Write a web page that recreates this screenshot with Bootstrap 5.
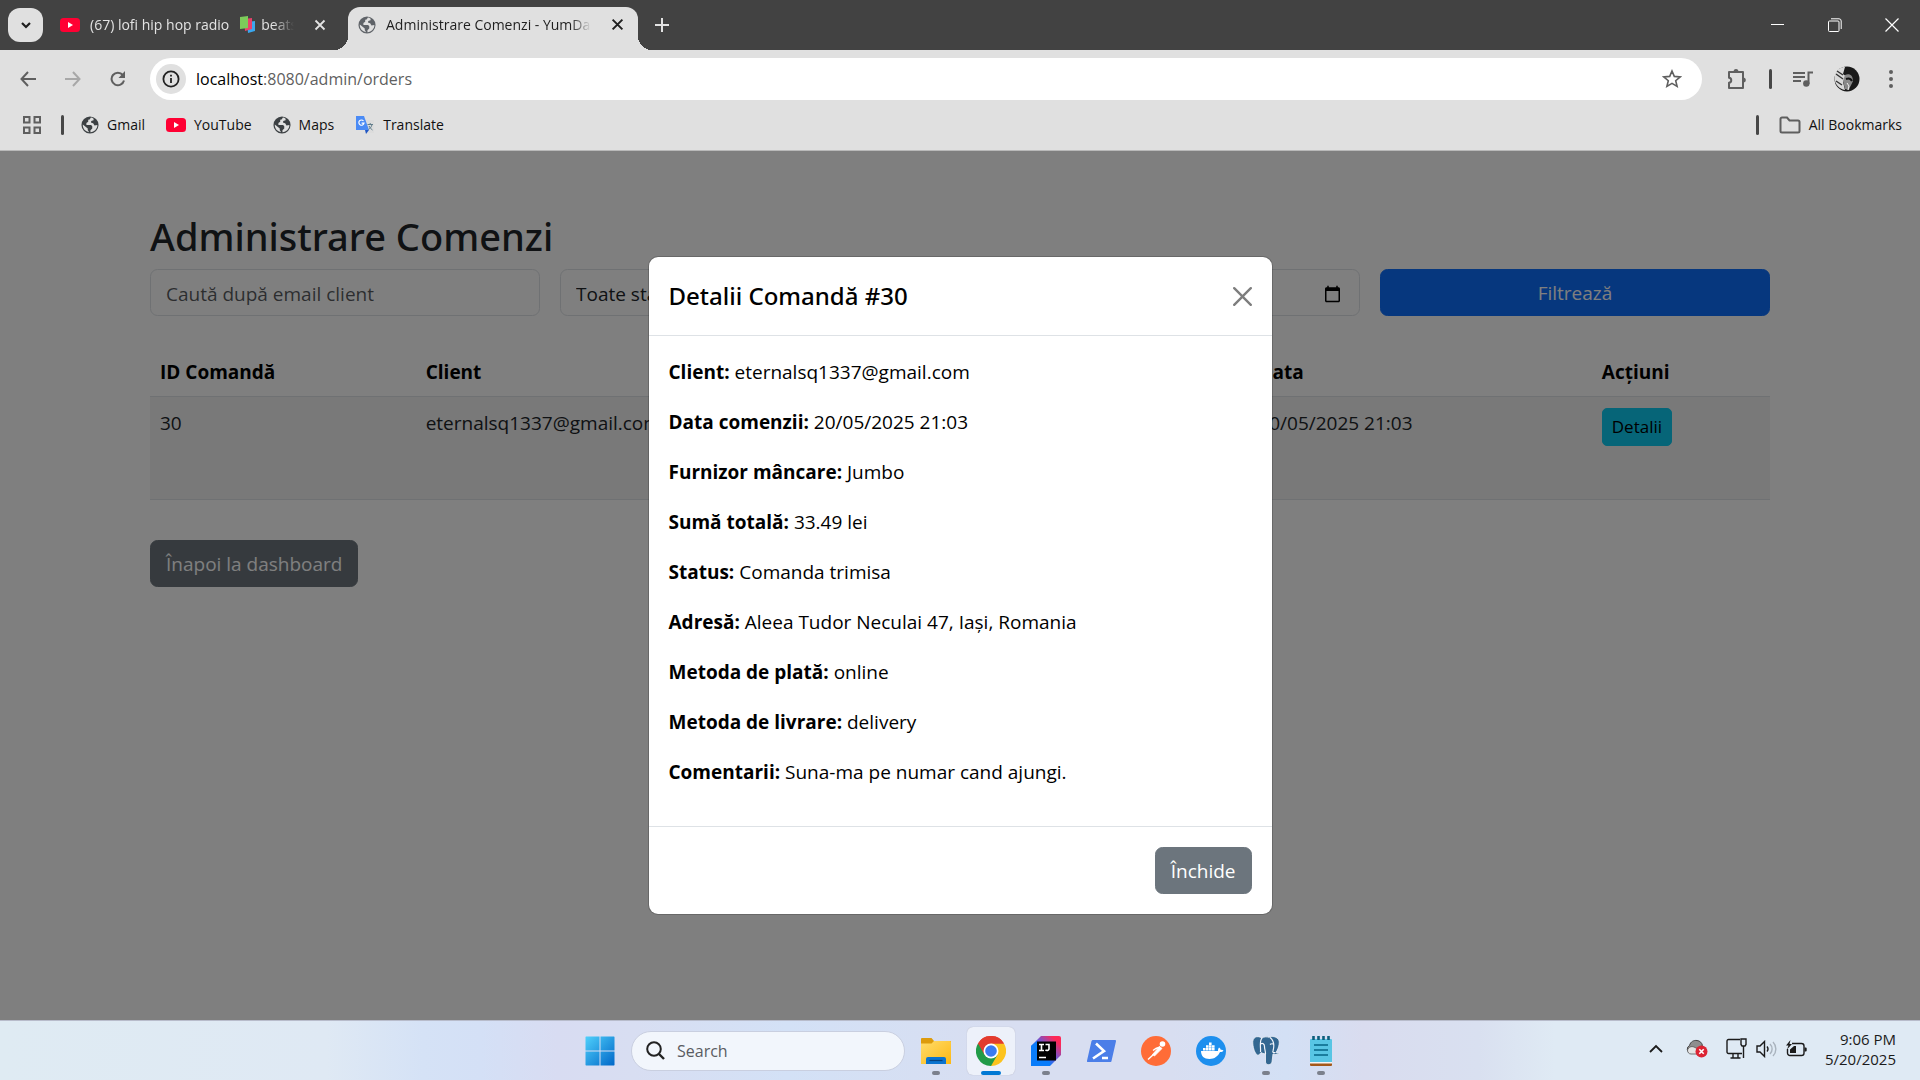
<!DOCTYPE html>
<html lang="ro">
<head>
<meta charset="utf-8">
<meta name="viewport" content="width=device-width, initial-scale=1">
<title>Administrare Comenzi - YumDash</title>
<link href="https://cdn.jsdelivr.net/npm/bootstrap@5.3.0/dist/css/bootstrap.min.css" rel="stylesheet">
<style>
:root { font-size: 20px; --ui: "Open Sans", "Noto Sans", sans-serif; }
body { font-family: var(--ui); font-size: 19px; line-height: 30px; overflow: hidden; }
svg { flex: none; display: block; }
button.bare { border: 0; background: none; padding: 0; color: inherit; display: flex; align-items: center; justify-content: center; }

/* browser window */
.tabstrip { height: 50px; background: #424242; color: #e3e3e3; font-size: 14px; line-height: 20px; padding-left: 8px; }
.tab-search { width: 35px; height: 34px; border-radius: 12px; background: #e0e0e0 !important; color: #1f1f1f !important; margin-top: 8px; }
.browser-tab { height: 43px; margin-top: 7px; white-space: nowrap; }
.tab-idle { width: 305px; padding: 0 22px 8px 17px; }
.tab-live { width: 290px; padding: 0 14px 8px 10px; background: #e0e0e0; color: #1f1f1f; border-radius: 12px 12px 0 0; position: relative; }
.tab-live::before, .tab-live::after { content: ""; position: absolute; bottom: 0; width: 14px; height: 14px; }
.tab-live::before { left: -14px; background: radial-gradient(circle at 0 0, transparent 14px, #e0e0e0 14px); }
.tab-live::after { right: -14px; background: radial-gradient(circle at 100% 0, transparent 14px, #e0e0e0 14px); }
.tab-title { flex: 1 1 0; overflow: hidden; -webkit-mask-image: linear-gradient(90deg, #000 90%, transparent); mask-image: linear-gradient(90deg, #000 90%, transparent); }
.tab-new { margin-left: 12px; }
.win-buttons button.bare { width: 57px; height: 50px; }
.toolbar-row { background: #e0e0e0; height: 58px; color: #5f5f5f; }
.nav-tools { width: 150px; padding-left: 5px; }
.nav-tools button.bare { width: 45px; height: 42px; }
.address { height: 42px; border-radius: 21px; background: #fff; padding: 0 20px 0 6px; font-size: 16px; line-height: 24px; }
.info-dot { width: 30px; height: 30px; border-radius: 50%; background: #e0e0e0; color: #222; }
.right-tools { width: 218px; padding-left: 24px; gap: 21px; }
.menu-dots { width: 20px; }
.tool-line { width: 3px; height: 20px; border-radius: 2px; background: #474747; }
.bookmarks { background: #e0e0e0; height: 43px; border-bottom: 1px solid #b9b9b9; padding: 0 18px 8px 23px; font-size: 14px; line-height: 20px; }
.bookmarks a { color: #111; text-decoration: none; display: flex; align-items: center; gap: 8px; }
.bookmark-list { gap: 21px; margin-left: 17px; }

/* page */
.page-area { flex: 1 1 0; min-height: 0; position: relative; overflow: hidden; }
.container-xl { max-width: 1650px; }
.page-area h2 { font-family: "Noto Sans", sans-serif; font-size: 38px; line-height: 50px; font-weight: 500; margin-bottom: 8px; }
.btn, .form-control, .form-select { font-size: 19px; line-height: 30px; padding-top: 8px; padding-bottom: 7px; height: 47px; }
.btn { --bs-btn-padding-x: 15px; }
.btn-sm { font-size: 17px; line-height: 26px; height: 38px; padding: 5px 9px; }
.form-control, .form-select { padding: 9px 15px 6px; }
.table { table-layout: fixed; --bs-table-striped-bg: rgba(0,0,0,.05); margin-bottom: 40px; }
.table th, .table td { padding: 11px 10px 9px; color: #000; }
.table tbody tr { height: 103px; }
.shade { position: absolute; inset: 0; background: rgba(0,0,0,.5); z-index: 10; }
.page-area .modal { position: absolute; display: flex; z-index: 20; align-items: center; justify-content: center; }
.page-area .modal-dialog { width: 625px; max-width: 625px; margin: 0; }
.modal-title { font-family: "Noto Sans", sans-serif; font-size: 24px; line-height: 38px; font-weight: 500; color: #000; }
.modal-content { color: #000; }
.modal-body { padding: 21px 20px 19px; }
.modal-body p { margin-bottom: 20px; }

/* taskbar */
.taskbar { height: 60px; border-top: 1px solid #b8bccb; background: linear-gradient(90deg, #dfebf3 0, #dfe9f4 17%, #d5e2f6 22%, #d4e0f6 25%, #d8dcf2 29%, #d8def2 33%, #d3e1f6 41%, #d8def1 52%, #d8def1 61%, #d3e0f5 67%, #d9dcef 71%, #d9e0f0 77%, #dfeaf4 81%, #dfeaf4 100%); color: #1b1b1b; }
.dock { margin-left: 576px; gap: 7px; }
.dock button.bare { width: 48px; height: 48px; border-radius: 6px; position: relative; }
.dock .running::after { content: ""; position: absolute; left: 20px; bottom: 0; width: 8px; height: 4px; border-radius: 2px; background: #7b808c; }
.dock .focused { background: #edf1fa; box-shadow: 0 0 1px #aab; }
.dock .focused::after { left: 14px; width: 20px; background: #0078d4; }
.find-box { width: 274px; height: 40px; border-radius: 20px; background: #f2f6fc; border: 1px solid #c9cfe0; padding: 0 14px; }
.find-box input { border: 0; outline: 0; background: none; width: 150px; font-size: 16px; line-height: 22px; padding: 0; margin-left: 2px; }
.find-box input::placeholder { color: #5a5c62; opacity: 1; }
.tray { font-size: 15px; line-height: 20px; margin-right: 24px; gap: 18px; padding-bottom: 4px; }
.tray-group { gap: 9px; }
</style>
<script src="https://cdn.jsdelivr.net/npm/bootstrap@5.3.0/dist/js/bootstrap.bundle.min.js"></script>
</head>
<body class="vh-100 d-flex flex-column">

<svg width="0" height="0" class="position-absolute" aria-hidden="true">
  <defs>
    <symbol id="globe" viewBox="0 0 20 20"><circle cx="10" cy="10" r="9.5" fill="currentColor"/><path d="M11 1.8 9.600 3.800 8 4.300V6.500L6 7.800V10h5.200l1.300 1.500V14l-2 1.800V18c4.500-.3 7.700-3.800 7.700-8L15 10.500 13.500 8l-2.200-.5V5.500l2.700-.8V3C13 2.300 12 1.900 11 1.800zM2 9.500 7.500 14v1.500L9 18C5 17.500 1.700 14 2 9.500z" fill="#e0e0e0"/></symbol>
    <symbol id="youtube" viewBox="0 0 20 14"><rect width="20" height="14" rx="3.500" fill="#ff0033"/><path d="M8 4v6l5-3z" fill="#fff"/></symbol>
    <symbol id="cross" viewBox="0 0 12 12"><path d="M1.500 1.500l9 9M10.500 1.500l-9 9" stroke="currentColor" stroke-width="1.800" fill="none"/></symbol>
  </defs>
</svg>

<header>
  <div class="tabstrip d-flex">
    <button class="bare tab-search" aria-label="Search tabs"><svg width="12" height="12" viewBox="0 0 12 12"><path d="M2 4l4 4 4-4" fill="none" stroke="currentColor" stroke-width="2.200"/></svg></button>
    <div class="browser-tab tab-idle d-flex align-items-center">
      <svg width="20" height="14"><use href="#youtube"/></svg>
      <span class="tab-title d-flex align-items-center ms-2">(67) lofi hip hop radio
        <svg class="ms-2 me-1" width="17" height="17" viewBox="0 0 17 17"><path d="M8 6l8-1v10l-7 2z" fill="#3aa7ee"/><path d="M5 3l8-1v11l-7 2z" fill="#e8416b"/><path d="M1 1l8-1v12l-8 1z" fill="#7ccb5a"/></svg>
        beats</span>
      <button class="bare ms-3" aria-label="Close tab"><svg width="12" height="12"><use href="#cross"/></svg></button>
    </div>
    <div class="browser-tab tab-live d-flex align-items-center">
      <svg width="18" height="18" color="#5f6368"><use href="#globe"/></svg>
      <span class="tab-title ms-2">Administrare Comenzi - YumDash</span>
      <button class="bare ms-3" aria-label="Close tab"><svg width="13" height="13"><use href="#cross"/></svg></button>
    </div>
    <button class="bare tab-new px-1" aria-label="New tab"><svg width="14" height="14" viewBox="0 0 14 14"><path d="M7 0v14M0 7h14" stroke="currentColor" stroke-width="2"/></svg></button>
    <div class="win-buttons d-flex ms-auto">
      <button class="bare" aria-label="Minimize"><svg width="13" height="13" viewBox="0 0 13 13"><path d="M0 5.500h13" stroke="#fff"/></svg></button>
      <button class="bare" aria-label="Restore"><svg width="14" height="14" viewBox="0 0 14 14" fill="none" stroke="#fff"><rect x=".5" y="3" width="10.500" height="10.500" rx="1"/><path d="M3 .8h8a2.200 2.200 0 0 1 2.200 2.200v8"/></svg></button>
      <button class="bare" aria-label="Close"><svg width="14" height="14" viewBox="0 0 14 14"><path d="M.5.5l13 13M13.500.5l-13 13" stroke="#fff" stroke-width="1.200"/></svg></button>
    </div>
  </div>

  <div class="toolbar-row d-flex align-items-center">
    <div class="nav-tools d-flex">
      <button class="bare" aria-label="Back"><svg width="16" height="16" viewBox="0 0 16 16"><path d="M8 1L1.500 8 8 15M1.500 8H16" fill="none" stroke="currentColor" stroke-width="2"/></svg></button>
      <button class="bare" aria-label="Forward" disabled><svg width="16" height="16" viewBox="0 0 16 16"><path d="M8 1l6.500 7L8 15M14.500 8H0" fill="none" stroke="#a8a8a8" stroke-width="2"/></svg></button>
      <button class="bare" aria-label="Reload"><svg width="16" height="16" viewBox="0 0 16 16"><path d="M14 9.500A6.300 6.300 0 1 1 12.800 4L14 5.500" fill="none" stroke="currentColor" stroke-width="2"/><path d="M15 0v7H8.500z" fill="currentColor"/></svg></button>
    </div>
    <div class="address d-flex align-items-center flex-fill">
      <span class="info-dot d-flex align-items-center justify-content-center"><svg width="18" height="18" viewBox="0 0 18 18"><circle cx="9" cy="9" r="7.600" fill="none" stroke="currentColor" stroke-width="1.800"/><path d="M9 8v5M9 4.800v1.800" stroke="currentColor" stroke-width="1.800"/></svg></span>
      <div class="ps-2 flex-fill" role="textbox" aria-label="Address"><span class="text-black">localhost</span>:8080/admin/orders</div>
      <button class="bare" aria-label="Bookmark this page"><svg width="20" height="20" viewBox="0 0 20 20"><path d="M10 2l2.300 5.400 5.900.5-4.500 3.800 1.400 5.700L10 14.400l-5.100 3 1.400-5.700L1.800 7.900l5.900-.5z" fill="none" stroke="currentColor" stroke-width="1.600"/></svg></button>
    </div>
    <div class="right-tools d-flex align-items-center">
      <button class="bare" aria-label="Extensions"><svg width="22" height="22" viewBox="0 0 22 22"><path d="M3 4h14v16H3v-5.200c3-.3 3-4.700 0-5z" fill="none" stroke="currentColor" stroke-width="2" stroke-linejoin="round"/><path d="M7.500 4a2.500 3 0 0 1 5 0zM17 9.500a2.800 2.500 0 0 1 0 5z" fill="currentColor"/></svg></button>
      <span class="tool-line"></span>
      <button class="bare" aria-label="Media"><svg width="20" height="16" viewBox="0 0 20 16"><path d="M0 2h12M0 6h12M0 10h8M15.500 13V1.500H20" fill="none" stroke="currentColor" stroke-width="2"/><circle cx="13.300" cy="12.500" r="3.200" fill="currentColor"/></svg></button>
      <button class="bare" aria-label="Profile"><svg width="26" height="26" viewBox="0 0 26 26"><circle cx="13" cy="13" r="12.500" fill="#191919"/><path d="M1 8C3 3 7 1 11 1L9 8l4 3-4 5 2 8C5 23 1 18 .6 13z" fill="#d9d9d9"/><path d="M2 8l7 5M3 5l6 4M2 15l6 4" stroke="#333" stroke-width="1.400"/><path d="M11 9c5-2 8 1 8 6-1 3-3 5-4 9l-4-1-2-8z" fill="#888"/><path d="M12 13c3-1 5 0 6 2" stroke="#111" stroke-width="2" fill="none"/><path d="M13 17l2 3-1 4" stroke="#eee" fill="none"/></svg></button>
      <button class="bare menu-dots" aria-label="Menu"><svg width="4" height="18" viewBox="0 0 4 18" fill="currentColor"><circle cx="2" cy="2" r="2"/><circle cx="2" cy="9" r="2"/><circle cx="2" cy="16" r="2"/></svg></button>
    </div>
  </div>

  <nav class="bookmarks d-flex align-items-center" aria-label="Bookmarks">
    <svg width="18" height="18" viewBox="0 0 18 18" fill="none" stroke="#5f5f5f" stroke-width="2"><path d="M1 1h5.500v5.500H1zM11.500 1H17v5.500h-5.500zM1 11.500h5.500V17H1zM11.500 11.500H17V17h-5.500z"/></svg>
    <span class="tool-line ms-3"></span>
    <div class="bookmark-list d-flex">
      <a href="#"><svg width="18" height="18" color="#3c4043"><use href="#globe"/></svg>Gmail</a>
      <a href="#"><svg width="20" height="14"><use href="#youtube"/></svg>YouTube</a>
      <a href="#"><svg width="18" height="18" color="#3c4043"><use href="#globe"/></svg>Maps</a>
      <a href="#"><svg width="20" height="20" viewBox="0 0 20 20"><path d="M8 5h11v13H12z" fill="#dcdcdc"/><path d="M1 1h8l5 14H1z" fill="#4b8bf5"/><path d="M10 15h4l-3 4z" fill="#1f56c4"/><path d="M8.500 6A2.600 2.600 0 1 0 9 8.200H6.600" fill="none" stroke="#fff" stroke-width="1.200"/><path d="M12.500 9.500H18M15.200 8v1.500M17 9.500c-.5 2.500-2 4-3.500 5M14 11c.8 1.800 2 3 3.500 4" stroke="#607d8b" fill="none"/></svg>Translate</a>
    </div>
    <span class="tool-line ms-auto me-3"></span>
    <a href="#"><svg width="22" height="18" viewBox="0 0 22 18"><path d="M1.500 3a1.500 1.500 0 0 1 1.500-1.500h5l2.500 3H19A1.500 1.500 0 0 1 20.500 6v9a1.500 1.500 0 0 1-1.500 1.500H3A1.500 1.500 0 0 1 1.500 15z" fill="none" stroke="#5f5f5f" stroke-width="2"/></svg>All Bookmarks</a>
  </nav>
</header>

<main class="page-area bg-white">
  <div class="container-xl mt-5">
    <h2>Administrare Comenzi</h2>
    <form class="row g-3 mb-4">
      <div class="col-md-3"><input type="text" class="form-control" aria-label="Email client" placeholder="Caută după email client"></div>
      <div class="col-md-3"><select class="form-select" aria-label="Status"><option>Toate statusurile</option></select></div>
      <div class="col-md-3"><input type="date" class="form-control" aria-label="Data"></div>
      <div class="col-md-3"><button type="button" class="btn btn-primary w-100">Filtrează</button></div>
    </form>
    <table class="table table-striped">
      <colgroup><col style="width:16.4%"><col style="width:51.4%"><col style="width:21.200%"><col></colgroup>
      <thead><tr><th>ID Comandă</th><th>Client</th><th>Data</th><th>Acțiuni</th></tr></thead>
      <tbody><tr><td>30</td><td>eternalsq1337@gmail.com</td><td>20/05/2025 21:03</td><td><button type="button" class="btn btn-info btn-sm">Detalii</button></td></tr></tbody>
    </table>
    <a href="#" class="btn btn-secondary">Înapoi la dashboard</a>
  </div>

  <div class="shade"></div>
  <div class="modal" role="dialog" aria-labelledby="detailsTitle">
    <div class="modal-dialog">
      <div class="modal-content">
        <div class="modal-header">
          <h5 class="modal-title" id="detailsTitle">Detalii Comandă #30</h5>
          <button type="button" class="btn-close" aria-label="Close"></button>
        </div>
        <div class="modal-body">
          <p><strong>Client:</strong> eternalsq1337@gmail.com</p>
          <p><strong>Data comenzii:</strong> 20/05/2025 21:03</p>
          <p><strong>Furnizor mâncare:</strong> Jumbo</p>
          <p><strong>Sumă totală:</strong> 33.49 lei</p>
          <p><strong>Status:</strong> Comanda trimisa</p>
          <p><strong>Adresă:</strong> Aleea Tudor Neculai 47, Iași, Romania</p>
          <p><strong>Metoda de plată:</strong> online</p>
          <p><strong>Metoda de livrare:</strong> delivery</p>
          <p><strong>Comentarii:</strong> Suna-ma pe numar cand ajungi.</p>
        </div>
        <div class="modal-footer">
          <button type="button" class="btn btn-secondary">Închide</button>
        </div>
      </div>
    </div>
  </div>
</main>

<footer class="taskbar d-flex align-items-center">
  <div class="dock d-flex align-items-center">
    <button class="bare" aria-label="Start"><svg width="30" height="30" viewBox="0 0 30 30"><defs><linearGradient id="win" x2="1" y2="1"><stop stop-color="#4fd0fb"/><stop offset="1" stop-color="#0067c8"/></linearGradient></defs><path d="M1 .5h13.500v14H.5V1zM15.500.5H29l.5.500v13.500h-14zM.5 15.500h14v14H1l-.5-.5zM15.500 15.500h14V29l-.5.500H15.500z" fill="url(#win)"/></svg></button>
    <div class="find-box d-flex align-items-center gap-2">
      <svg width="19" height="19" viewBox="0 0 19 19"><circle cx="8" cy="8" r="6.800" fill="none" stroke="#222" stroke-width="2"/><path d="M13 13l5 5" stroke="#222" stroke-width="2.400"/></svg>
      <input type="search" aria-label="Search" placeholder="Search">
    </div>
    <button class="bare running" aria-label="File Explorer"><svg width="30" height="28" viewBox="0 0 30 28"><defs><linearGradient id="fld" x2="1" y2="1"><stop stop-color="#ffdc6b"/><stop offset="1" stop-color="#fdb813"/></linearGradient></defs><path d="M0 2a1 1 0 0 1 1-1h9.500l2.500 3h17v5H0z" fill="#dd9b0c"/><path d="M0 6.500h10.500L13 4h16a1 1 0 0 1 1 1v22H0z" fill="url(#fld)"/><path d="M5 27v-5a2 2 0 0 1 2-2h16a2 2 0 0 1 2 2v5z" fill="#0b74cf"/><path d="M8.500 23.500h13" stroke="#06427e" stroke-width="1.200"/></svg></button>
    <button class="bare running focused" aria-label="Chrome"><svg width="30" height="30" viewBox="0 0 30 30"><path d="M15 15L2 7.500A15 15 0 0 1 28 7.500z" fill="#e33b2e"/><path d="M15 15V7.500h13A15 15 0 0 1 15 30z" fill="#fcc31e"/><path d="M15 15l6.500 3.700L15 30A15 15 0 0 1 2 7.500z" fill="#219b48"/><path d="M15 7.500h13A15 15 0 0 0 2 7.500l6.500 11.200z" fill="#e33b2e"/><circle cx="15" cy="15" r="7.500" fill="#fff"/><circle cx="15" cy="15" r="5.800" fill="#3a7bf0"/></svg></button>
    <button class="bare running" aria-label="IntelliJ IDEA"><svg width="30" height="30" viewBox="0 0 30 30"><defs><linearGradient id="idea" x1="0" y1="1" x2="1" y2="0"><stop offset=".3" stop-color="#087cfa"/><stop offset=".55" stop-color="#6b57d6"/><stop offset=".85" stop-color="#fe2857"/></linearGradient></defs><path d="M0 10L10 0h18a2 2 0 0 1 2 2v17L19 30H0z" fill="url(#idea)"/><path d="M0 10l6-5v20h13v5H0z" fill="#087cfa"/><path d="M6 5.500h19v19H6z" fill="#000"/><path d="M8 8.500h5M10.500 8.500v6M8 14.500h5M14.500 8.500H18v4.500a2 2 0 0 1-3.500.8M8 21.500h7" stroke="#fff" stroke-width="1.600" fill="none"/></svg></button>
    <button class="bare" aria-label="PowerShell"><svg width="29" height="22" viewBox="0 0 29 22"><path d="M5.500 0H28a1 1 0 0 1 1 1.200L24.500 21a1 1 0 0 1-1 1H1a1 1 0 0 1-1-1.200L4.500 1z" fill="#4b7ee8"/><path d="M9 3.500l8 7.500-11 7.500M15 18h6" stroke="#fff" stroke-width="2.600" fill="none"/></svg></button>
    <button class="bare" aria-label="Postman"><svg width="30" height="30" viewBox="0 0 30 30"><circle cx="15" cy="15" r="15" fill="#ff6c37"/><circle cx="21.500" cy="8" r="2.800" fill="#fff"/><path d="M18.500 10.500l-7 8 2 1.500 7.500-7.500z" fill="#fff" stroke="#fff" stroke-width=".8"/><path d="M12.500 18.500l-5.500 5M12 14.500l3-2 4-1.500" stroke="#fff" stroke-width="1.500" fill="none"/></svg></button>
    <button class="bare" aria-label="Docker"><svg width="30" height="30" viewBox="0 0 30 30"><circle cx="15" cy="15" r="15" fill="#1d8fee"/><path d="M5 15h17c0-2 .3-2.500 1-3.500 1 .5 1.500 1.300 1.700 2.300 1-.2 2 0 2.800.6-.7 1.300-2 1.800-3.500 1.700C22 20.500 18.500 23 13.500 23 8 23 5 20 5 15z" fill="#fff"/><path d="M7 12h2.600v2.500H7zM10 12h2.600v2.500H10zM13 12h2.600v2.500H13zM16 12h2.600v2.500H16zM10 9.200h2.600v2.500H10zM13 9.200h2.600v2.500H13zM13 6.500h2.600V9H13zM16 9.200h2.600v2.500H16z" fill="#fff"/></svg></button>
    <button class="bare running" aria-label="pgAdmin"><svg width="28" height="29" viewBox="0 0 28 29"><path d="M10 2C5-1 0 1 .8 8c.5 4.500 2 9.500 4.500 11 1.500.8 2.500-1 3.700-2.500 1 1 3 1 4.500 1.500v8c0 3.500 6 3.500 6.500 0l1-8c3 1 5.500.5 6.500-.7-1.500 0-2.800 0-3.500-.8C27 12 28.500 5 26 2.800c-2.500-2.500-6-2.800-9-1.500C14.500.5 12 .8 10 2z" fill="#336791" stroke="#f2f5fb" stroke-width=".8"/><path d="M10 2C7 5 9 12 8.500 16M18 1.500c4 3 4.500 8 3 13.500-.5 1.500.5 2 2.500 1.500M8.500 8c2-1.500 4 0 4 2.500 0 3 1 4 1 7.500M18 8.500c1-1 3-1 4 0" stroke="#f2f5fb" stroke-width="1.200" fill="none"/></svg></button>
    <button class="bare running" aria-label="Notepad"><svg width="22" height="30" viewBox="0 0 22 30"><path d="M0 26h22v3a1 1 0 0 1-1 1H1a1 1 0 0 1-1-1z" fill="#a4581a"/><path d="M0 25h22v2.500H0z" fill="#f5f5f5"/><path d="M0 4a1 1 0 0 1 1-1h20a1 1 0 0 1 1 1v22H0z" fill="#58c5e4"/><path d="M4 9h14M4 14h14M4 19h14" stroke="#066586" stroke-width="1.600"/><path d="M3.500 0v4M8.500 0v4M13.500 0v4M18.500 0v4" stroke="#0d5f7c" stroke-width="2.600"/></svg></button>
  </div>

  <div class="tray d-flex align-items-center ms-auto">
    <button class="bare me-1" aria-label="Show hidden icons"><svg width="14" height="9" viewBox="0 0 14 9"><path d="M1 8l6-6 6 6" fill="none" stroke="currentColor" stroke-width="1.800"/></svg></button>
    <svg width="22" height="19" viewBox="0 0 22 19"><path d="M4.500 14a4 4 0 0 1-1-7.500C4.500 2.500 8 1 11 1.500c3 .3 5 2.500 5.500 5L14 8z" fill="#8e8e8e" stroke="#444"/><path d="M1.500 11c1-3 4-4 6.500-3l6 3-3 4H5c-2 0-3.500-1.500-3.500-4z" fill="#e4e4e4" stroke="#555" stroke-width=".8"/><circle cx="15.500" cy="12.500" r="6" fill="#dc2433"/><path d="M13.300 10.300l4.400 4.400M17.700 10.300l-4.400 4.400" stroke="#fff" stroke-width="1.600"/></svg>
    <div class="tray-group d-flex align-items-center">
      <svg width="21" height="21" viewBox="0 0 21 21" fill="none" stroke="currentColor" stroke-width="1.400"><path d="M14 1.500H2.500a1.500 1.500 0 0 0-1.500 1.500v11a1.500 1.500 0 0 0 1.500 1.500H16M7 15.500v4M12 15.500v4M4.500 20h10M15 1h5v5.500l-1 1.500h-3l-1-1.500zM17.500 8v12"/></svg>
      <svg width="21" height="18" viewBox="0 0 21 18" fill="none" stroke="currentColor" stroke-width="1.400"><path d="M1 6h3l4.500-4.500v15L4 12H1zM11 6.500a4 4 0 0 1 0 5"/><path d="M14 4a7 7 0 0 1 0 10M17 2a10 10 0 0 1 0 14" stroke="#a9b3bd"/></svg>
      <svg width="21" height="17" viewBox="0 0 21 17"><path d="M6 3.500h9.500A2.500 2.500 0 0 1 18 6v7a2.500 2.500 0 0 1-2.500 2.500H4A2.500 2.500 0 0 1 1.500 13V9" fill="none" stroke="currentColor" stroke-width="1.400"/><path d="M18.500 7.500h1.200a1 1 0 0 1 1 1v2a1 1 0 0 1-1 1h-1.200zM4 13V9.500L8 6h2v7zM4.500 0L0 5.500h2.500L1 9.500l5-5.500H3.500z" fill="currentColor"/></svg>
    </div>
    <div class="text-end">9:06 PM<br>5/20/2025</div>
  </div>
</footer>
</body>
</html>
